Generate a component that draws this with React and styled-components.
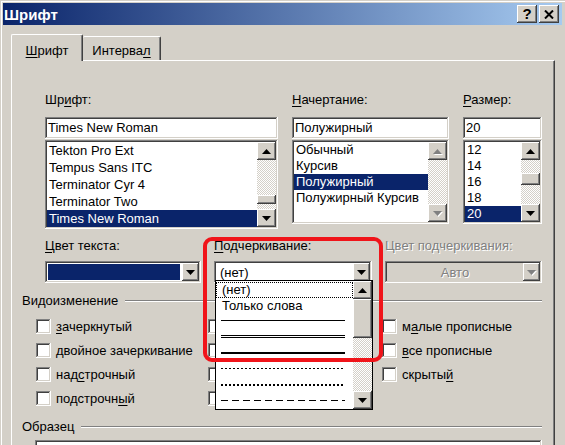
import React from "react";
import styled, { createGlobalStyle, css } from "styled-components";

const FACE = "#d4d0c8";
const SHADOW = "#808080";
const DARK = "#404040";
const NAVY = "#0a246a";

const raised = css`
  background: ${FACE};
  box-shadow: inset -1px -1px ${DARK}, inset 1px 1px #fff,
    inset -2px -2px ${SHADOW}, inset 2px 2px ${FACE};
`;

const sunken = css`
  box-shadow: inset -1px -1px #fff, inset 1px 1px ${SHADOW},
    inset -2px -2px ${FACE}, inset 2px 2px ${DARK};
`;

const GlobalStyle = createGlobalStyle`
  html, body {
    margin: 0;
    padding: 0;
    overflow: hidden;
    background: ${FACE};
  }
  body {
    font-family: "Liberation Sans", Arial, sans-serif;
    font-size: 13px;
    color: #000;
  }
`;

const Window = styled.div`
  position: relative;
  width: 565px;
  height: 445px;
  overflow: hidden;
  box-sizing: border-box;
  padding: 3px 3px 0 3px;
  background: ${FACE};
  box-shadow: inset 1px 1px ${FACE}, inset 2px 2px #fff;
`;

const TitleBar = styled.div`
  display: flex;
  align-items: center;
  height: 22px;
  padding: 0 3px 0 1px;
  background: linear-gradient(to right, ${NAVY}, #a6caf0);
`;

const Title = styled.div`
  flex: 1;
  color: #fff;
  font-weight: bold;
  font-size: 15px;
`;

const CaptionButton = styled.div`
  ${raised};
  width: 20px;
  height: 18px;
  margin-left: 2px;
  display: flex;
  align-items: center;
  justify-content: center;
  font-weight: bold;
  font-size: 15px;
  line-height: 18px;
`;

const TabRow = styled.div`
  position: relative;
  z-index: 1;
  display: flex;
  align-items: flex-end;
  margin: 9px 0 -1px 8px;
`;

const Tab = styled.div`
  box-sizing: border-box;
  background: ${FACE};
  border-top: 1px solid #fff;
  border-left: 1px solid #fff;
  border-right: 1px solid ${DARK};
  box-shadow: inset -1px 0 ${SHADOW};
  border-top-left-radius: 2px;
  border-top-right-radius: 2px;
  text-align: center;
  line-height: 16px;
  ${(p) =>
    p.$active
      ? css`
          width: 72px;
          height: 27px;
          padding-top: 8px;
        `
      : css`
          width: 78px;
          height: 24px;
          padding-top: 6px;
          margin-bottom: 1px;
          border-left: none;
        `}
`;

const Key = styled.span`
  text-decoration: underline;
  text-underline-offset: 2px;
`;

const Panel = styled.div`
  box-sizing: border-box;
  width: 544px;
  height: 400px;
  margin-left: 8px;
  padding: 31px 12px 0 10px;
  border-top: 1px solid #fff;
  border-left: 1px solid #fff;
  border-right: 1px solid ${DARK};
  box-shadow: inset -1px 0 ${SHADOW};
`;

const FontSection = styled.div`
  display: grid;
  grid-template-columns: 233px 157px 79px;
  column-gap: 14px;
  padding-left: 23px;
`;

const Column = styled.div`
  display: flex;
  flex-direction: column;
`;

const Label = styled.div`
  height: 16px;
  line-height: 16px;
  margin-bottom: ${(p) => p.$gap ?? 9}px;
  white-space: nowrap;
  color: ${(p) => (p.$disabled ? SHADOW : "#000")};
  ${(p) => p.$disabled && "text-shadow: 1px 1px 0 #fff;"}
`;

const Field = styled.div`
  box-sizing: border-box;
  height: 22px;
  line-height: 22px;
  padding-left: 3px;
  background: #fff;
  white-space: nowrap;
  overflow: hidden;
  ${sunken};
`;

const List = styled.div`
  box-sizing: border-box;
  display: flex;
  margin-top: 1px;
  height: ${(p) => p.$height}px;
  padding: 2px;
  background: #fff;
  ${sunken};
`;

const Items = styled.div`
  flex: 1;
  overflow: hidden;
`;

const Item = styled.div`
  height: ${(p) => p.$h}px;
  line-height: ${(p) => p.$h}px;
  padding-left: 2px;
  white-space: nowrap;
  background: ${(p) => (p.$selected ? NAVY : "transparent")};
  color: ${(p) => (p.$selected ? "#fff" : "#000")};
`;

const Bar = styled.div`
  width: 19px;
  display: flex;
  flex-direction: column;
  flex: none;
`;

const ScrollButton = styled.div`
  ${raised};
  height: 18px;
  flex: none;
  display: flex;
  align-items: center;
  justify-content: center;
`;

const Track = styled.div`
  position: relative;
  flex: 1;
  background-color: #fff;
  background-image: repeating-conic-gradient(${FACE} 0 25%, #fff 0 50%);
  background-size: 2px 2px;
`;

const Thumb = styled.div`
  ${raised};
  position: absolute;
  left: 0;
  right: 0;
  top: ${(p) => p.$top}px;
  height: ${(p) => p.$height}px;
`;

const Arrow = ({ dir, disabled }) => (
  <svg
    width="9"
    height="5"
    viewBox="0 0 9 5"
    style={{ overflow: "visible" }}
  >
    {disabled && (
      <polygon
        points={dir === "up" ? "1,6 10,6 5.5,1" : "1,1 10,1 5.5,6"}
        fill="#fff"
      />
    )}
    <polygon
      points={dir === "up" ? "0,5 9,5 4.5,0" : "0,0 9,0 4.5,5"}
      fill={disabled ? SHADOW : "#000"}
    />
  </svg>
);

const ScrollBar = ({ thumbTop, thumbHeight, disabled }) => (
  <Bar>
    <ScrollButton>
      <Arrow dir="up" disabled={disabled} />
    </ScrollButton>
    <Track>
      {thumbHeight ? <Thumb $top={thumbTop} $height={thumbHeight} /> : null}
    </Track>
    <ScrollButton>
      <Arrow dir="down" disabled={disabled} />
    </ScrollButton>
  </Bar>
);

const ListBox = ({ items, selected, rowHeight, scroll }) => (
  <List $height={rowHeight * items.length + 4}>
    <Items>
      {items.map((it) => (
        <Item key={it} $h={rowHeight} $selected={it === selected}>
          {it}
        </Item>
      ))}
    </Items>
    <ScrollBar {...scroll} />
  </List>
);

const ColorRow = styled.div`
  display: grid;
  grid-template-columns: 156px 158px 157px;
  column-gap: 13px;
  margin-top: 9px;
  padding-left: 23px;
`;

const Combo = styled.div`
  box-sizing: border-box;
  height: 22px;
  display: flex;
  padding: 2px;
  background: ${(p) => (p.$disabled ? FACE : "#fff")};
  ${sunken};
`;

const ComboValue = styled.div`
  flex: 1;
  display: flex;
  align-items: center;
  padding-left: ${(p) => (p.$center ? 0 : 4)}px;
  justify-content: ${(p) => (p.$center ? "center" : "flex-start")};
  color: ${(p) => (p.$disabled ? SHADOW : "#000")};
  ${(p) => p.$disabled && "text-shadow: 1px 1px 0 #fff;"}
`;

const Swatch = styled.div`
  flex: 1;
  align-self: stretch;
  margin: 1px 2px 1px 1px;
  background: ${NAVY};
`;

const ComboButton = styled(ScrollButton)`
  width: 17px;
  height: auto;
`;

const GroupHeader = styled.div`
  display: flex;
  align-items: center;
  height: 16px;
  margin-top: ${(p) => p.$top}px;
`;

const GroupTitle = styled.span`
  margin-right: 7px;
  line-height: 16px;
`;

const Etched = styled.div`
  flex: 1;
  height: 0;
  border-top: 1px solid ${SHADOW};
  border-bottom: 1px solid #fff;
`;

const CheckGrid = styled.div`
  display: grid;
  grid-template-columns: 172px 174px auto;
  grid-template-rows: repeat(4, 24px);
  margin-top: 5px;
  padding-left: 14px;
`;

const CheckItem = styled.label`
  display: flex;
  align-items: center;
  gap: 5px;
  white-space: nowrap;
  grid-column: ${(p) => p.$col};
  grid-row: ${(p) => p.$row};
`;

const CheckBox = styled.span`
  flex: none;
  width: 15px;
  height: 15px;
  background: #fff;
  ${sunken};
`;

const Preview = styled.div`
  width: 507px;
  height: 40px;
  margin: 5px 0 0 13px;
  background: #fff;
  ${sunken};
`;

const Dropdown = styled.div`
  position: absolute;
  left: 215px;
  top: 280px;
  width: 158px;
  height: 130px;
  box-sizing: border-box;
  border: 1px solid #000;
  background: #fff;
  display: flex;
  z-index: 2;
`;

const DropItems = styled.div`
  flex: 1;
  padding-top: 1px;
`;

const DropRow = styled.div`
  box-sizing: border-box;
  height: 16px;
  line-height: 14px;
  padding: ${(p) => (p.$line ? "0 8px 0 5px" : "0 0 0 6px")};
  padding-top: ${(p) => (p.$line ? p.$offset ?? 6 : 1)}px;
  ${(p) => p.$focus && `outline: 1px dotted #000; outline-offset: -1px;`}
`;

const lineStyles = {
  single: css`
    height: 1px;
    background: #000;
  `,
  double: css`
    height: 3px;
    border-top: 1px solid #000;
    border-bottom: 1px solid #000;
    box-sizing: border-box;
  `,
  thick: css`
    height: 2px;
    background: #000;
  `,
  dotted: css`
    height: 1px;
    background: repeating-linear-gradient(to right, #000 0 2px, transparent 2px 4px);
  `,
  thickDotted: css`
    height: 2px;
    background: repeating-linear-gradient(to right, #000 0 2px, transparent 2px 4px);
  `,
  dashed: css`
    height: 1px;
    background: repeating-linear-gradient(to right, #000 0 7px, transparent 7px 11px);
  `,
};

const LineSample = styled.div`
  ${(p) => lineStyles[p.$kind]};
`;

const RedFrame = styled.div`
  position: absolute;
  left: 203px;
  top: 237px;
  width: 180px;
  height: 125px;
  box-sizing: border-box;
  border: 4px solid #f0141a;
  border-radius: 9px;
  z-index: 3;
  pointer-events: none;
`;

const CloseIcon = () => (
  <svg width="10" height="9" viewBox="0 0 10 9">
    <path d="M1 0.5 L9 8.5 M9 0.5 L1 8.5" stroke="#000" strokeWidth="2" />
  </svg>
);

const fonts = [
  "Tekton Pro Ext",
  "Tempus Sans ITC",
  "Terminator Cyr 4",
  "Terminator Two",
  "Times New Roman",
];
const styles = ["Обычный", "Курсив", "Полужирный", "Полужирный Курсив", ""];
const sizes = ["12", "14", "16", "18", "20"];

const effects = [
  [<><Key>з</Key>ачеркнутый</>, <><Key>д</Key>войное зачеркивание</>, <>над<Key>с</Key>трочный</>, <>подстрочн<Key>ы</Key>й</>],
  [<>с тенью</>, <>контур</>, <>приподнятый</>, <>утопленный</>],
  [<>м<Key>а</Key>лые прописные</>, <><Key>в</Key>се прописные</>, <>скрыты<Key>й</Key></>],
];

const underlineKinds = ["single", "double", "thick", "dotted", "thickDotted", "dashed"];

export default function App() {
  return (
    <>
      <GlobalStyle />
      <Window>
        <TitleBar>
          <Title>Шрифт</Title>
          <CaptionButton>?</CaptionButton>
          <CaptionButton>
            <CloseIcon />
          </CaptionButton>
        </TitleBar>

        <TabRow>
          <Tab $active>
            <Key>Ш</Key>рифт
          </Tab>
          <Tab>
            Интерва<Key>л</Key>
          </Tab>
        </TabRow>

        <Panel>
          <FontSection>
            <Column>
              <Label>
                Шр<Key>и</Key>фт:
              </Label>
              <Field>Times New Roman</Field>
              <ListBox
                items={fonts}
                selected="Times New Roman"
                rowHeight={17}
                scroll={{ thumbTop: 35, thumbHeight: 9 }}
              />
            </Column>
            <Column>
              <Label>
                <Key>Н</Key>ачертание:
              </Label>
              <Field>Полужирный</Field>
              <ListBox
                items={styles}
                selected="Полужирный"
                rowHeight={16}
                scroll={{ disabled: true }}
              />
            </Column>
            <Column>
              <Label>
                <Key>Р</Key>азмер:
              </Label>
              <Field>20</Field>
              <ListBox
                items={sizes}
                selected="20"
                rowHeight={16}
                scroll={{ thumbTop: 13, thumbHeight: 12 }}
              />
            </Column>
          </FontSection>

          <ColorRow>
            <Column>
              <Label $gap={7}>
                <Key>Ц</Key>вет текста:
              </Label>
              <Combo>
                <Swatch />
                <ComboButton>
                  <Arrow dir="down" />
                </ComboButton>
              </Combo>
            </Column>
            <Column>
              <Label $gap={7}>
                <Key>П</Key>одчеркивание:
              </Label>
              <Combo>
                <ComboValue>(нет)</ComboValue>
                <ComboButton>
                  <Arrow dir="down" />
                </ComboButton>
              </Combo>
            </Column>
            <Column>
              <Label $gap={7} $disabled>
                Цвет подчеркивания:
              </Label>
              <Combo $disabled>
                <ComboValue $center $disabled>
                  Авто
                </ComboValue>
                <ComboButton>
                  <Arrow dir="down" disabled />
                </ComboButton>
              </Combo>
            </Column>
          </ColorRow>

          <GroupHeader $top={10}>
            <GroupTitle>Видоизменение</GroupTitle>
            <Etched />
          </GroupHeader>
          <CheckGrid>
            {effects.map((col, ci) =>
              col.map((text, ri) => (
                <CheckItem key={`${ci}-${ri}`} $col={ci + 1} $row={ri + 1}>
                  <CheckBox />
                  <span>{text}</span>
                </CheckItem>
              ))
            )}
          </CheckGrid>

          <GroupHeader $top={9}>
            <GroupTitle>Образец</GroupTitle>
            <Etched />
          </GroupHeader>
          <Preview />
        </Panel>

        <Dropdown>
          <DropItems>
            <DropRow $focus>(нет)</DropRow>
            <DropRow>Только слова</DropRow>
            {underlineKinds.map((k) => (
              <DropRow key={k} $line $offset={k === "double" ? 5 : 6}>
                <LineSample $kind={k} />
              </DropRow>
            ))}
          </DropItems>
          <ScrollBar thumbTop={0} thumbHeight={39} />
        </Dropdown>

        <RedFrame />
      </Window>
    </>
  );
}
